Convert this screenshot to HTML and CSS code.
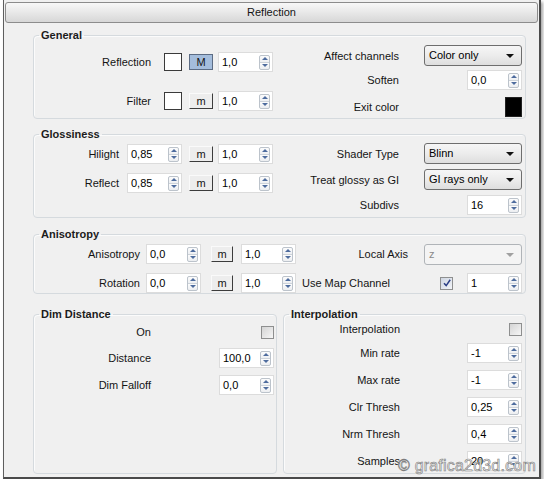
FILE: index.html
```html
<!DOCTYPE html>
<html lang="en">
<head>
  <meta charset="UTF-8">
  <title>Reflection</title>
  <link rel="stylesheet" href="styles.css">
</head>
<body>

<div class="window">
  <div class="titlebar">Reflection</div>

  <!-- General -->
  <fieldset class="group general">
    <legend>General</legend>
    <div class="cols">
      <div class="col-left">
        <div class="row g1">
          <span class="lbl">Reflection</span>
          <span class="swatch"></span>
          <span class="mbtn on">M</span>
          <span class="spin"><span class="val">1,0</span><span class="arr"><i class="up"></i><i class="dn"></i></span></span>
        </div>
        <div class="row g2">
          <span class="lbl">Filter</span>
          <span class="swatch"></span>
          <span class="mbtn">m</span>
          <span class="spin"><span class="val">1,0</span><span class="arr"><i class="up"></i><i class="dn"></i></span></span>
        </div>
      </div>
      <div class="col-right">
        <div class="row rr1">
          <span class="lbl">Affect channels</span>
          <span class="ctl"><span class="combo">Color only<i class="drop"></i></span></span>
        </div>
        <div class="row rr2">
          <span class="lbl">Soften</span>
          <span class="ctl"><span class="spin"><span class="val">0,0</span><span class="arr"><i class="up"></i><i class="dn"></i></span></span></span>
        </div>
        <div class="row rr3">
          <span class="lbl">Exit color</span>
          <span class="ctl"><span class="swatch black"></span></span>
        </div>
      </div>
    </div>
  </fieldset>

  <!-- Glossiness -->
  <fieldset class="group glossy">
    <legend>Glossiness</legend>
    <div class="cols">
      <div class="col-left">
        <div class="row s1">
          <span class="lbl">Hilight</span>
          <span class="spin"><span class="val">0,85</span><span class="arr"><i class="up"></i><i class="dn"></i></span></span>
          <span class="mbtn">m</span>
          <span class="spin"><span class="val">1,0</span><span class="arr"><i class="up"></i><i class="dn"></i></span></span>
        </div>
        <div class="row s2">
          <span class="lbl">Reflect</span>
          <span class="spin"><span class="val">0,85</span><span class="arr"><i class="up"></i><i class="dn"></i></span></span>
          <span class="mbtn">m</span>
          <span class="spin"><span class="val">1,0</span><span class="arr"><i class="up"></i><i class="dn"></i></span></span>
        </div>
      </div>
      <div class="col-right">
        <div class="row t1">
          <span class="lbl">Shader Type</span>
          <span class="ctl"><span class="combo">Blinn<i class="drop"></i></span></span>
        </div>
        <div class="row t2">
          <span class="lbl">Treat glossy as GI</span>
          <span class="ctl"><span class="combo">GI rays only<i class="drop"></i></span></span>
        </div>
        <div class="row t3">
          <span class="lbl">Subdivs</span>
          <span class="ctl"><span class="spin"><span class="val">16</span><span class="arr"><i class="up"></i><i class="dn"></i></span></span></span>
        </div>
      </div>
    </div>
  </fieldset>

  <!-- Anisotropy -->
  <fieldset class="group aniso">
    <legend>Anisotropy</legend>
    <div class="cols">
      <div class="col-left">
        <div class="row a1">
          <span class="lbl">Anisotropy</span>
          <span class="spin"><span class="val">0,0</span><span class="arr"><i class="up"></i><i class="dn"></i></span></span>
          <span class="mbtn">m</span>
          <span class="spin"><span class="val">1,0</span><span class="arr"><i class="up"></i><i class="dn"></i></span></span>
        </div>
        <div class="row a2">
          <span class="lbl">Rotation</span>
          <span class="spin"><span class="val">0,0</span><span class="arr"><i class="up"></i><i class="dn"></i></span></span>
          <span class="mbtn">m</span>
          <span class="spin"><span class="val">1,0</span><span class="arr"><i class="up"></i><i class="dn"></i></span></span>
        </div>
      </div>
      <div class="col-right">
        <div class="row b1">
          <span class="lbl">Local Axis</span>
          <span class="ctl"><span class="combo off">z<i class="drop"></i></span></span>
        </div>
        <div class="row b2">
          <span class="lbl">Use Map Channel</span>
          <span class="check on">
            <svg width="10" height="10" viewBox="0 0 10 10"><path d="M2 5.2 L4.2 7.6 L8.2 1.8" fill="none" stroke="#2b3f86" stroke-width="1.5"/></svg>
          </span>
          <span class="spin"><span class="val">1</span><span class="arr"><i class="up"></i><i class="dn"></i></span></span>
        </div>
      </div>
    </div>
  </fieldset>

  <div class="bottom">
    <!-- Dim Distance -->
    <fieldset class="group dim">
      <legend>Dim Distance</legend>
      <div class="list">
        <div class="row d1">
          <span class="lbl">On</span>
          <span class="ctl"><span class="check"></span></span>
        </div>
        <div class="row d2">
          <span class="lbl">Distance</span>
          <span class="ctl"><span class="spin"><span class="val">100,0</span><span class="arr"><i class="up"></i><i class="dn"></i></span></span></span>
        </div>
        <div class="row d3">
          <span class="lbl">Dim Falloff</span>
          <span class="ctl"><span class="spin"><span class="val">0,0</span><span class="arr"><i class="up"></i><i class="dn"></i></span></span></span>
        </div>
      </div>
    </fieldset>

    <!-- Interpolation -->
    <fieldset class="group interp">
      <legend>Interpolation</legend>
      <div class="list">
        <div class="row i0">
          <span class="lbl">Interpolation</span>
          <span class="ctl"><span class="check"></span></span>
        </div>
        <div class="row i1">
          <span class="lbl">Min rate</span>
          <span class="ctl"><span class="spin"><span class="val">-1</span><span class="arr"><i class="up"></i><i class="dn"></i></span></span></span>
        </div>
        <div class="row i1">
          <span class="lbl">Max rate</span>
          <span class="ctl"><span class="spin"><span class="val">-1</span><span class="arr"><i class="up"></i><i class="dn"></i></span></span></span>
        </div>
        <div class="row i1">
          <span class="lbl">Clr Thresh</span>
          <span class="ctl"><span class="spin"><span class="val">0,25</span><span class="arr"><i class="up"></i><i class="dn"></i></span></span></span>
        </div>
        <div class="row i1">
          <span class="lbl">Nrm Thresh</span>
          <span class="ctl"><span class="spin"><span class="val">0,4</span><span class="arr"><i class="up"></i><i class="dn"></i></span></span></span>
        </div>
        <div class="row i1">
          <span class="lbl">Samples</span>
          <span class="ctl"><span class="spin"><span class="val">20</span><span class="arr"><i class="up"></i><i class="dn"></i></span></span></span>
        </div>
      </div>
    </fieldset>
  </div>

  <div class="watermark">© grafica2d3d.com</div>
</div>

</body>
</html>
```

FILE: styles.css
```css
* {
  margin: 0;
  padding: 0;
  box-sizing: border-box;
}

body {
  font-family: "Liberation Sans", Arial, sans-serif;
  font-size: 11px;
  color: #141414;
  background: #fff;
}

/* outer window frame */
.window {
  position: relative;
  margin-left: 3px;
  width: 538px;
  height: 479px;
  padding: 2px 13px 0 29px;
  background: #f0f0f0;
  border-left: 1px solid #5e5e5e;
  border-right: 2px solid #4a4a4a;
  border-bottom: 2px solid #4a4a4a;
  box-shadow: 2px 2px 3px rgba(0, 0, 0, 0.35);
}

.titlebar {
  margin: 0 -12px 0 -28px;
  height: 21px;
  line-height: 19px;
  text-align: center;
  border: 1px solid #8c8c8c;
  border-radius: 3px;
  background: linear-gradient(#f8f8f8, #e8e8e8 50%, #d7d7d7);
}

/* group boxes */
.group {
  border: 1px solid #d5dade;
  border-radius: 4px;
  box-shadow: inset 1px 1px 0 #fbfbfb;
  min-width: 0;
}

.group legend {
  font-weight: bold;
  line-height: 13px;
  padding: 0 2px;
  margin-left: 5px;
  color: #1c1c1c;
}

.general { margin-top: 6px; }
.glossy { margin-top: 9px; }
.aniso { margin-top: 10px; }

.cols {
  display: flex;
}

.general .cols,
.glossy .cols { height: 76px; }
.aniso .cols { height: 52px; }

.row {
  display: flex;
  align-items: center;
  height: 20px;
}

.lbl {
  white-space: nowrap;
}

/* left columns: label flush right against the controls */
.col-left { width: 239px; }
.aniso .col-left { width: 262px; }

.col-left .lbl {
  flex: 1;
  text-align: right;
}

.general .col-left .lbl { margin-right: 13px; }
.glossy .col-left .lbl { margin-right: 8px; }
.aniso .col-left .lbl { margin-right: 6px; }

.col-left .mbtn { margin: 0 5px 0 7px; }
.aniso .col-left .mbtn { width: 22px; margin: 0 8px 0 10px; }

/* right columns: label column + right aligned control */
.col-right {
  flex: 1;
  padding-right: 3px;
}

.col-right .lbl {
  width: 126px;
  text-align: right;
}

.ctl {
  flex: 1;
  display: flex;
  justify-content: flex-end;
}

.g1 { margin-top: 10px; }
.g2 { margin-top: 19px; }
.rr1 { margin-top: 3px; height: 21px; }
.rr2 { margin-top: 4px; }
.rr3 { margin-top: 7px; }

.s1 { margin-top: 3px; }
.s2 { margin-top: 9px; }
.t1 { margin-top: 2px; height: 21px; }
.t2 { margin-top: 5px; height: 21px; }
.t3 { margin-top: 5px; }

.a1, .b1 { margin-top: 3px; }
.a2, .b2 { margin-top: 9px; }

.aniso .b1 .lbl { width: 112px; }
.aniso .b2 .lbl {
  flex: 1;
  width: auto;
  text-align: left;
  padding-left: 6px;
}
.b2 .check { margin-right: 14px; }

/* bottom pair */
.bottom {
  display: flex;
  gap: 6px;
  margin-top: 14px;
}

.dim { width: 244px; }
.interp { flex: 1; }

.list { height: 151px; }
.dim .list { padding-right: 2px; }
.interp .list { padding-right: 3px; }

.list .lbl { text-align: right; }
.dim .lbl { width: 117px; }
.interp .lbl { width: 116px; }

.d1 { margin-top: 1px; }
.d2 { margin-top: 6px; }
.d3 { margin-top: 7px; }
.i0 { margin-top: 1px; height: 14px; }
.i1 { margin-top: 7px; }

/* controls */
.swatch {
  width: 18px;
  height: 18px;
  background: #fff;
  border: 1px solid #3a3a3a;
}

.swatch.black {
  width: 17px;
  height: 20px;
  background: #000;
  border-color: #222;
}

.mbtn {
  width: 24px;
  height: 16px;
  line-height: 14px;
  text-align: center;
  background: #ededed;
  border-top: 1px solid #fafafa;
  border-left: 1px solid #fafafa;
  border-right: 1px solid #3c3c3c;
  border-bottom: 1px solid #3c3c3c;
}

.mbtn.on {
  background: #a4bddc;
  border: 1px solid #5c6c84;
}

.spin {
  display: flex;
  align-items: center;
  width: 55px;
  height: 20px;
  padding-left: 3px;
  background: #fff;
  border: 1px solid #dcdcdc;
}

.spin .val {
  flex: 1;
  color: #000;
}

.arr {
  display: flex;
  flex-direction: column;
  align-items: center;
  justify-content: space-around;
  width: 11px;
  height: 15px;
  margin-right: 2px;
  border: 1px solid #bcc3cb;
  border-radius: 2px;
  background: linear-gradient(#fcfcfc, #eef0f3 45%, #cdd3da 45%, #cdd3da 55%, #fcfcfc 55%, #eceef1);
}

.arr i {
  display: block;
  border-left: 3px solid transparent;
  border-right: 3px solid transparent;
}

.arr .up { border-bottom: 3px solid #4e6c9e; }
.arr .dn { border-top: 3px solid #4e6c9e; }

.combo {
  position: relative;
  width: 98px;
  height: 100%;
  padding-left: 4px;
  line-height: 19px;
  border: 1px solid #6e6e6e;
  border-radius: 3px;
  background: linear-gradient(#f6f6f6, #ececec 50%, #dedede);
  color: #000;
}

.combo .drop {
  position: absolute;
  right: 7px;
  top: 8px;
  border-left: 4px solid transparent;
  border-right: 4px solid transparent;
  border-top: 4px solid #111;
}

.combo.off {
  border-color: #b0b4b8;
  background: #f4f4f4;
  color: #8a8a8a;
}

.combo.off .drop { border-top-color: #a0a0a0; }

.check {
  display: flex;
  align-items: center;
  justify-content: center;
  width: 13px;
  height: 13px;
  border: 1px solid #8e8f8f;
  background: linear-gradient(135deg, #d4d4d4, #f6f6f6);
}

.check.on {
  background: linear-gradient(135deg, #cfd6e2, #f2f4f8);
}

.watermark {
  position: absolute;
  left: 394px;
  top: 457px;
  font-size: 16px;
  color: #f4f4f4;
  -webkit-text-stroke: 0.6px #7c7c7c;
  letter-spacing: 0.2px;
}
```
